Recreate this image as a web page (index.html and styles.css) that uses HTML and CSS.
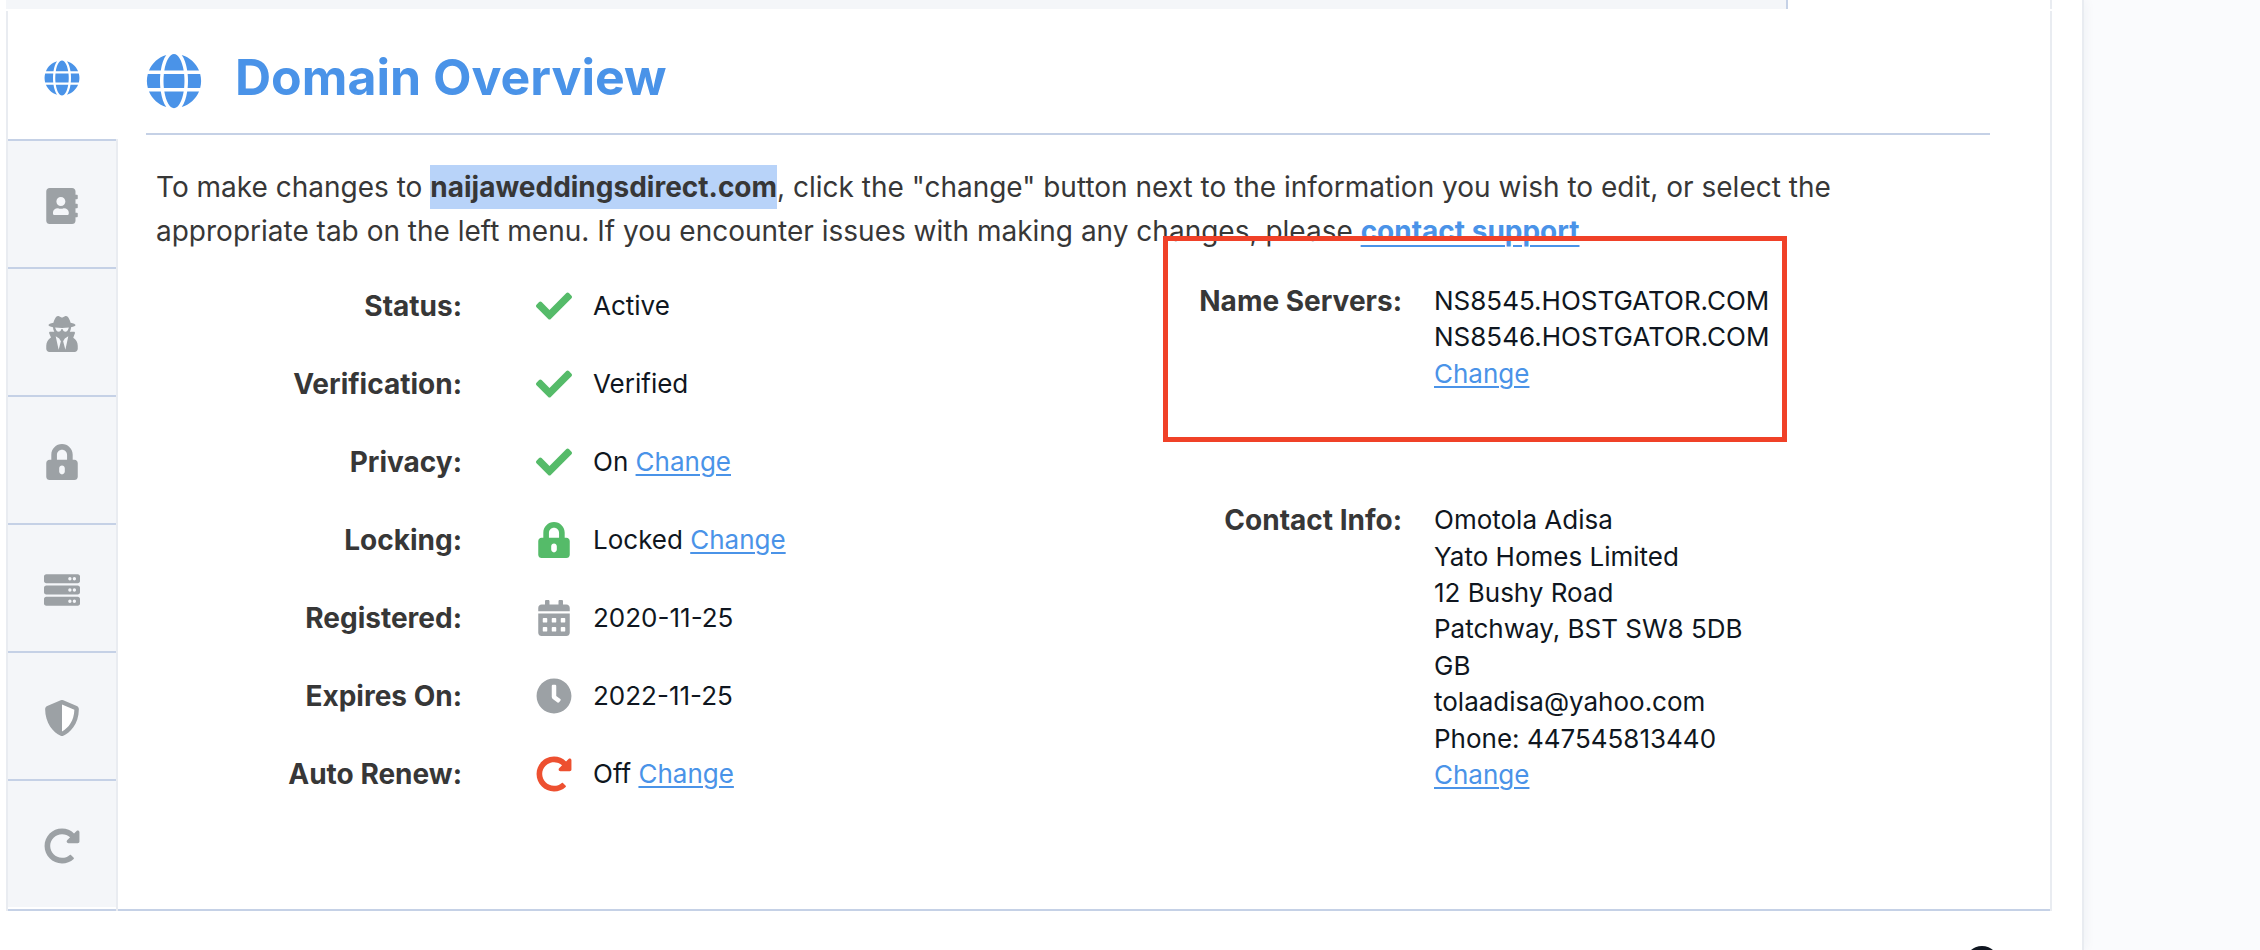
FILE: index.html
```html
<!DOCTYPE html>
<html lang="en">
<head>
<meta charset="utf-8">
<title>Domain Overview</title>
<link rel="stylesheet" href="styles.css">
</head>
<body>
<svg class="sprite" aria-hidden="true">
  <symbol id="globe" viewBox="0 0 496 512"><path d="M336.5 160C322 70.7 287.8 8 248 8s-74 62.7-88.5 152h177zM152 256c0 22.2 1.2 43.5 3.3 64h185.3c2.1-20.5 3.3-41.8 3.3-64s-1.2-43.5-3.3-64H155.3c-2.1 20.5-3.3 41.8-3.3 64zm324.7-96c-28.6-67.9-86.5-120.4-158-141.6 24.4 33.8 41.2 84.7 50 141.6h108zM177.2 18.4C105.8 39.6 47.8 92.1 19.3 160h108c8.7-56.9 25.5-107.8 49.9-141.6zM487.4 192H372.7c2.1 21 3.3 42.5 3.3 64s-1.2 43-3.3 64h114.6c5.5-20.5 8.6-41.8 8.6-64s-3.1-43.5-8.5-64zM120 256c0-21.5 1.2-43 3.3-64H8.6C3.2 212.5 0 233.8 0 256s3.2 43.5 8.6 64h114.6c-2-21-3.2-42.5-3.2-64zm39.5 96c14.5 89.3 48.7 152 88.5 152s74-62.7 88.5-152h-177zm159.3 141.6c71.4-21.2 129.4-73.7 158-141.6h-108c-8.8 56.9-25.6 107.8-50 141.6zM19.3 352c28.6 67.9 86.5 120.4 158 141.6-24.4-33.8-41.2-84.7-50-141.6h-108z"/></symbol>
  <symbol id="book" viewBox="0 0 448 512"><path d="M436 160c6.600 0 12-5.400 12-12v-40c0-6.600-5.400-12-12-12h-20V48c0-26.500-21.500-48-48-48H48C21.500 0 0 21.500 0 48v416c0 26.500 21.500 48 48 48h320c26.500 0 48-21.500 48-48v-48h20c6.600 0 12-5.400 12-12v-40c0-6.600-5.400-12-12-12h-20v-64h20c6.600 0 12-5.400 12-12v-40c0-6.600-5.400-12-12-12h-20v-64h20zm-228-32c35.300 0 64 28.700 64 64s-28.700 64-64 64-64-28.700-64-64 28.700-64 64-64zm112 236.800c0 10.600-10 19.200-22.400 19.200H118.400C106 384 96 375.400 96 364.800v-19.200c0-31.800 30.100-57.600 67.200-57.600h5c12.300 5.100 25.700 8 39.800 8s27.600-2.900 39.800-8h5c37.100 0 67.200 25.800 67.200 57.600v19.200z"/></symbol>
  <symbol id="secret" viewBox="0 0 448 512"><path d="M383.9 308.3l23.900-62.600c4-10.500-3.700-21.700-15-21.700h-58.500c11-18.900 17.800-40.600 17.800-64v-.3c39.200-7.800 64-19.100 64-31.700 0-13.300-27.300-25.100-70.100-33-9.200-32.800-27-65.800-40.600-82.800-9.500-11.900-25.900-15.600-39.500-8.800l-27.600 13.800c-9 4.500-19.600 4.500-28.600 0L182.100 3.400c-13.600-6.800-30-3.100-39.500 8.800-13.500 17-31.400 50-40.600 82.800-42.700 7.900-70 19.700-70 33 0 12.600 24.800 23.900 64 31.700v.3c0 23.400 6.800 45.100 17.800 64H56.300c-11.500 0-19.200 11.700-14.700 22.300l25.800 60.200C27.300 329.800 0 372.700 0 422.400v44.800C0 491.900 20.100 512 44.800 512h358.400c24.700 0 44.800-20.100 44.800-44.800v-44.800c0-48.400-25.800-90.400-64.100-114.100zM176 480l-41.600-192 49.600 32 24 40-32 120zm96 0l-32-120 24-40 49.600-32L272 480zm41.700-298.500c-3.900 11.900-7 24.600-16.500 33.400-10.100 9.300-48 22.400-64-25-2.800-8.400-15.400-8.400-18.300 0-17 50.200-56 32.400-64 25-9.500-8.800-12.700-21.500-16.500-33.400-.8-2.500-6.300-5.700-6.300-5.800v-10.800c28.300 3.600 61 5.800 96 5.800s67.700-2.100 96-5.800v10.800c-.1.1-5.600 3.200-6.400 5.800z"/></symbol>
  <symbol id="lock" viewBox="0 0 448 512"><path d="M400 224h-24v-72C376 68.200 307.800 0 224 0S72 68.200 72 152v72H48c-26.500 0-48 21.500-48 48v192c0 26.500 21.500 48 48 48h352c26.500 0 48-21.500 48-48V272c0-26.500-21.500-48-48-48zM264 392c0 22.100-17.900 40-40 40s-40-17.900-40-40v-48c0-22.100 17.900-40 40-40s40 17.900 40 40v48zm32-168H152v-72c0-39.700 32.300-72 72-72s72 32.300 72 72v72z"/></symbol>
  <symbol id="server" viewBox="0 0 512 512"><path fill-rule="evenodd" d="M480 160H32c-17.700 0-32-14.300-32-32V64c0-17.700 14.300-32 32-32h448c17.700 0 32 14.300 32 32v64c0 17.700-14.300 32-32 32zm-48-88a24 24 0 1 0 0 48 24 24 0 1 0 0-48zm-64 0a24 24 0 1 0 0 48 24 24 0 1 0 0-48zM480 320H32c-17.700 0-32-14.300-32-32v-64c0-17.700 14.300-32 32-32h448c17.700 0 32 14.300 32 32v64c0 17.700-14.300 32-32 32zm-48-88a24 24 0 1 0 0 48 24 24 0 1 0 0-48zm-64 0a24 24 0 1 0 0 48 24 24 0 1 0 0-48zM480 480H32c-17.700 0-32-14.300-32-32v-64c0-17.700 14.300-32 32-32h448c17.700 0 32 14.300 32 32v64c0 17.700-14.300 32-32 32zm-48-88a24 24 0 1 0 0 48 24 24 0 1 0 0-48zm-64 0a24 24 0 1 0 0 48 24 24 0 1 0 0-48z"/></symbol>
  <symbol id="shield" viewBox="0 0 512 512"><path fill="#fff" d="M256 60l180 73C432 290 350 410 256 452z"/><path d="M466.500 83.700l-192-80a48.150 48.150 0 0 0-36.900 0l-192 80C27.700 91.100 16 108.600 16 128c0 198.500 114.500 335.700 221.500 380.300 11.800 4.900 25.100 4.900 36.900 0C360.100 472.600 496 349.300 496 128c0-19.400-11.700-36.900-29.500-44.300zM256.100 446.300l-.1-381 175.900 73.300c-3.300 151.400-82.100 261.100-175.800 307.700z"/></symbol>
  <symbol id="redo" viewBox="0 0 512 512"><path d="M256.455 8c66.269.119 126.437 26.233 170.859 68.685l35.715-35.715C478.149 25.851 504 36.559 504 57.941V192c0 13.255-10.745 24-24 24H345.941c-21.382 0-32.090-25.851-16.971-40.971l41.750-41.750c-30.864-28.899-70.801-44.907-113.230-45.273-92.398-.798-170.283 73.977-169.484 169.442C88.764 348.009 162.184 424 256 424c41.127 0 79.997-14.678 110.629-41.556 4.743-4.161 11.906-3.908 16.368.553l39.662 39.662c4.872 4.872 4.631 12.815-.482 17.433C378.202 479.813 319.926 504 256 504 119.034 504 8.001 392.967 8 256.002 7.999 119.193 119.646 7.755 256.455 8z"/></symbol>
  <symbol id="check" viewBox="0 0 512 512"><path d="M173.898 439.404l-166.400-166.400c-9.997-9.997-9.997-26.206 0-36.204l36.203-36.204c9.997-9.998 26.207-9.998 36.204 0L192 312.690 432.095 72.596c9.997-9.997 26.207-9.997 36.204 0l36.203 36.204c9.997 9.997 9.997 26.206 0 36.204l-294.400 294.401c-9.998 9.997-26.207 9.997-36.204-.001z"/></symbol>
  <symbol id="calendar" viewBox="0 0 448 512"><path fill-rule="evenodd" d="M0 464c0 26.500 21.500 48 48 48h352c26.500 0 48-21.500 48-48V192H0v272zM76 256h40q12 0 12 12v40q0 12-12 12H76q-12 0-12-12v-40q0-12 12-12zm128 0h40q12 0 12 12v40q0 12-12 12h-40q-12 0-12-12v-40q0-12 12-12zm128 0h40q12 0 12 12v40q0 12-12 12h-40q-12 0-12-12v-40q0-12 12-12zM76 384h40q12 0 12 12v40q0 12-12 12H76q-12 0-12-12v-40q0-12 12-12zm128 0h40q12 0 12 12v40q0 12-12 12h-40q-12 0-12-12v-40q0-12 12-12zm128 0h40q12 0 12 12v40q0 12-12 12h-40q-12 0-12-12v-40q0-12 12-12zM400 64h-48V16c0-8.800-7.200-16-16-16h-32c-8.800 0-16 7.200-16 16v48H160V16c0-8.800-7.200-16-16-16h-32c-8.800 0-16 7.200-16 16v48H48C21.500 64 0 85.500 0 112v48h448v-48c0-26.500-21.500-48-48-48z"/></symbol>
  <symbol id="clock" viewBox="0 0 512 512"><path d="M256 8C119 8 8 119 8 256s111 248 248 248 248-111 248-248S393 8 256 8Zm92.490 313l-20 25a16 16 0 0 1-22.490 2.500l-67-49.720a40 40 0 0 1-15-31.230V112a16 16 0 0 1 16-16h32a16 16 0 0 1 16 16V256l58 42.500A16 16 0 0 1 348.490 321Z"/></symbol>
</svg>

<div class="page">
  <div class="top-strip"><div class="top-strip-fill"></div></div>
  <main class="panel">
    <nav class="tabs" aria-label="Domain sections">
      <button class="tab tab-active" aria-label="Overview"><svg class="icon"><use href="#globe"/></svg></button>
      <button class="tab" aria-label="Contacts"><svg class="icon"><use href="#book"/></svg></button>
      <button class="tab" aria-label="Privacy"><svg class="icon"><use href="#secret"/></svg></button>
      <button class="tab" aria-label="Locking"><svg class="icon"><use href="#lock"/></svg></button>
      <button class="tab" aria-label="Name servers"><svg class="icon"><use href="#server"/></svg></button>
      <button class="tab" aria-label="Security"><svg class="icon"><use href="#shield"/></svg></button>
      <button class="tab" aria-label="Renewal"><svg class="icon"><use href="#redo"/></svg></button>
    </nav>
    <section class="content">
      <header class="heading">
        <svg class="heading-icon"><use href="#globe"/></svg>
        <h1 class="title">Domain Overview</h1>
      </header>
      <p class="intro">To make changes to <strong class="selected">naijaweddingsdirect.com</strong>, click the "change" button next to the information you wish to edit, or select the appropriate tab on the left menu. If you encounter issues with making any changes, please <a class="link support" href="#">contact support</a></p>
      <div class="details">
        <dl class="facts">
          <div class="fact"><dt class="label">Status:</dt><dd class="value"><svg class="icon green"><use href="#check"/></svg><span>Active</span></dd></div>
          <div class="fact"><dt class="label">Verification:</dt><dd class="value"><svg class="icon green"><use href="#check"/></svg><span>Verified</span></dd></div>
          <div class="fact"><dt class="label">Privacy:</dt><dd class="value"><svg class="icon green"><use href="#check"/></svg><span>On <a class="link" href="#">Change</a></span></dd></div>
          <div class="fact"><dt class="label">Locking:</dt><dd class="value"><svg class="icon green"><use href="#lock"/></svg><span>Locked <a class="link" href="#">Change</a></span></dd></div>
          <div class="fact"><dt class="label">Registered:</dt><dd class="value"><svg class="icon"><use href="#calendar"/></svg><span>2020-11-25</span></dd></div>
          <div class="fact"><dt class="label">Expires On:</dt><dd class="value"><svg class="icon"><use href="#clock"/></svg><span>2022-11-25</span></dd></div>
          <div class="fact"><dt class="label">Auto Renew:</dt><dd class="value"><svg class="icon red"><use href="#redo"/></svg><span>Off <a class="link" href="#">Change</a></span></dd></div>
        </dl>
        <dl class="records">
          <div class="record servers">
            <dt class="label">Name Servers:</dt>
            <dd class="lines">NS8545.HOSTGATOR.COM<br>NS8546.HOSTGATOR.COM<br><a class="link" href="#">Change</a></dd>
          </div>
          <div class="record">
            <dt class="label">Contact Info:</dt>
            <dd class="lines">Omotola Adisa<br>Yato Homes Limited<br>12 Bushy Road<br>Patchway, BST SW8 5DB<br>GB<br>tolaadisa@yahoo.com<br>Phone: 447545813440<br><a class="link" href="#">Change</a></dd>
          </div>
        </dl>
      </div>
    </section>
  </main>
  <footer class="footer"><button class="help" aria-label="Help"></button></footer>
</div>
</body>
</html>
```
FILE: styles.css
```css
*,
*::after {
  box-sizing: border-box;
}

body {
  margin: 0;
  background: #fafbfd;
  color: #0f1620;
  font-family: Inter, "Liberation Sans", sans-serif;
  font-size: 26px;
  line-height: 1.4;
}

.sprite {
  display: none;
}

.page {
  height: 100vh;
  overflow: hidden;
  margin-right: 176px;
  padding: 0 30px 0 6px;
  background: #fff;
  border-right: 2px solid #e9ecf1;
  box-shadow: 0 0 12px rgba(30, 50, 80, 0.06);
}

.top-strip {
  height: 9px;
  margin-bottom: 2px;
  padding-right: 262px;
  border-right: 2px solid #e9ecf1;
}

.top-strip-fill {
  height: 9px;
  background: #f4f6f9;
  border-right: 2px solid #c5d1e6;
}

.panel {
  display: flex;
  border: solid #e9ecf1;
  border-width: 0 2px;
}

.tabs {
  display: flex;
  flex-direction: column;
  width: 110px;
  flex: none;
}

.tab {
  height: 128px;
  padding: 6px 0 0;
  display: grid;
  place-items: center;
  background: #f4f6f9;
  border: solid #e9ecf1;
  border-width: 0 2px 0 0;
  box-shadow: inset 0 2px #c5d1e6;
  color: #9ca1a5;
}

.tab-active {
  background: #fff;
  border-color: #fff;
  box-shadow: none;
  color: #4a93e8;
}

.tab:last-child {
  height: 132px;
  padding-bottom: 4px;
  box-shadow: inset 0 2px #c5d1e6, inset 0 -2px #c5d1e6, inset 0 -4px #fff;
}

.icon {
  width: 36px;
  height: 36px;
  fill: currentColor;
}

.content {
  flex: 1;
  padding: 0 60px 0 28px;
  border-bottom: 2px solid #c5d1e6;
}

.heading {
  display: flex;
  align-items: center;
  gap: 33px;
  height: 124px;
  border-bottom: 2px solid #c5d1e6;
  color: #4a93e8;
}

.heading-icon {
  width: 56px;
  height: 56px;
  margin-top: 18px;
  fill: currentColor;
}

.title {
  margin: 10px 0 0;
  font-size: 50px;
  font-weight: 700;
  line-height: 56px;
}

.intro {
  margin: 30px 120px 0 10px;
  color: #373737;
  font-size: 28px;
  line-height: 44px;
}

.selected {
  display: inline-block;
  background: #b8d3f9;
  font-weight: 700;
}

.link {
  color: #4a93e8;
  text-decoration: underline;
  text-decoration-thickness: 2px;
  text-underline-offset: 3px;
}

.support {
  font-weight: 700;
  text-underline-offset: 4px;
}

.details {
  display: grid;
  grid-template-columns: 1fr 1fr;
  padding: 14px 10px 0;
}

.facts,
.records {
  margin: 0;
}

.fact {
  display: grid;
  grid-template-columns: 306px 1fr;
  gap: 74px;
  align-items: center;
  height: 78px;
}

.label {
  color: #373737;
  font-size: 28px;
  font-weight: 700;
  line-height: 36px;
  text-align: right;
}

.value {
  display: flex;
  align-items: center;
  gap: 21px;
  margin: 0;
}

.value .icon {
  color: #9ca1a5;
}

.value .green {
  color: #55bb69;
}

.value .red {
  color: #ed5030;
}

.records {
  padding-top: 16px;
}

.record {
  display: grid;
  grid-template-columns: 334px 1fr;
  gap: 32px;
}

.servers {
  position: relative;
  margin-bottom: 110px;
}

/* Marker frame drawn over the name server block */
.servers::after {
  content: "";
  position: absolute;
  top: -47px;
  left: 95px;
  width: 624px;
  height: 206px;
  border: 5px solid #f04128;
}

.lines {
  margin: 0;
}

.footer {
  display: flex;
  justify-content: flex-end;
  padding: 35px 53px 0 0;
}

.help {
  width: 34px;
  height: 34px;
  padding: 0;
  border: 0;
  border-radius: 50%;
  background: #0f1620;
}
```
